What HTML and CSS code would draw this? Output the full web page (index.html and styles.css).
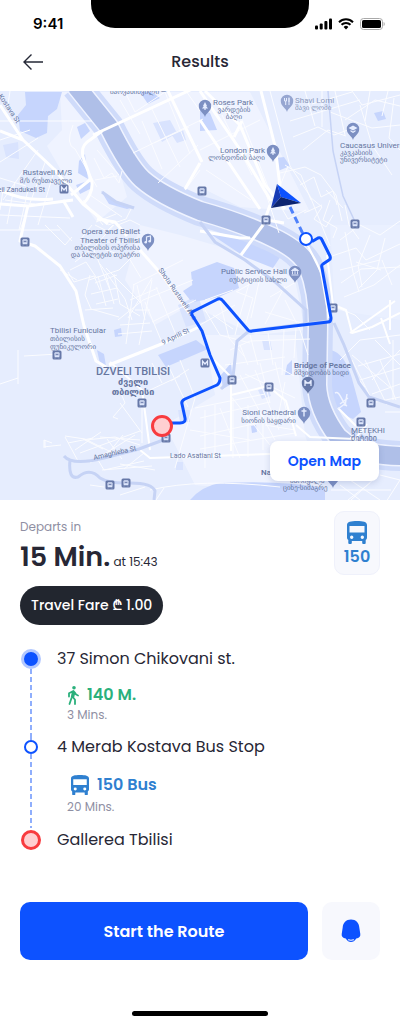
FILE: index.html
```html
<!DOCTYPE html>
<html lang="en">
<head>
  <meta charset="utf-8">
  <meta name="viewport" content="width=device-width, initial-scale=1">
  <title>Results</title>
  <link rel="stylesheet" href="styles.css">
</head>
<body>
  <div class="screen">
    <div class="status-bar">
      <span class="time">9:41</span>
      <span class="notch"></span>
      <span class="status-icons">
        <svg width="17" height="12" viewBox="0 0 17 12"><rect y="7.5" width="3" height="4" rx="1"/><rect x="4.7" y="5.5" width="3" height="6" rx="1"/><rect x="9.4" y="3" width="3" height="8.5" rx="1"/><rect x="14" y="0.5" width="3" height="11" rx="1"/></svg>
        <svg width="16" height="12" viewBox="0 0 16 12"><path d="M8 11.5 5.6 9a3.5 3.5 0 0 1 4.8 0z"/><path d="M3.5 6.8a6.4 6.4 0 0 1 9 0M1 4.2a10 10 0 0 1 14 0" fill="none" stroke="#000" stroke-width="2"/></svg>
        <svg width="25" height="12" viewBox="0 0 25 12"><rect x="0.5" y="0.5" width="22" height="11" rx="3" fill="none" stroke="#a9a9a9"/><rect x="2" y="2" width="19" height="8" rx="1.6"/><path d="M23.6 4v4c1.5-.6 1.5-3.4 0-4z" fill="#a9a9a9"/></svg>
      </span>
    </div>

    <header class="header">
      <button class="back" aria-label="Back">
        <svg width="22" height="18" viewBox="0 0 22 18"><path d="M9.5 1.5 2 9l7.5 7.5M2 9h19" fill="none" stroke="#252836" stroke-width="1.4"/></svg>
      </button>
      <h1>Results</h1>
    </header>

    <div class="map">
      <svg class="map-canvas" viewBox="0 91 400 409">
        <defs>
          <g id="stop">
            <rect x="-4.5" y="-4.5" width="9" height="9" rx="1.5" fill="#6678a8"/>
            <rect x="-2.5" y="-2.7" width="5" height="5" rx="1" fill="#dce5fb"/>
            <path d="M-1.7-1.5h3.4v1.700h-3.4zM-2 2.500v1M2 2.500v1" fill="#6678a8" stroke="#dce5fb" stroke-width=".5"/>
          </g>
          <g id="metro">
            <rect x="-4.5" y="-4.5" width="9" height="9" rx="1.5" fill="#6678a8"/>
            <path d="M-2.5 2.500v-4.500L0 1l2.500-3v4.500" fill="none" stroke="#e6edff" stroke-width="1.3"/>
          </g>
          <path id="pin" d="M0 11C-1 7-6.200 5.500-6.200 0a6.200 6.200 0 0 1 12.400 0C6.200 5.500 1 7 0 11z"/>
          <path id="tree" d="M0-4 2 0H1.200L3 2.500H.6V4H-.6V2.500H-3L-1.200 0H-2z" fill="#e6edff"/>
        </defs>

        <rect y="91" width="400" height="409" fill="#e6edfe"/>

        <!-- lighter districts -->
        <g fill="#eff3ff">
          <path d="M60 92h15l42 70 10 35-30 25-28-38-22-38 15-16zM95 92h105v110l-55-30-32-50zM190 92h60l60 120-70-5-40-20z"/>
          <path d="M140 225l40 10 85 25 30 20 10 50-50 5-65-30-35 20-30-45zM205 335l90 0 10 100 20 60-130-10-30-60 50-30z"/>
          <path d="M330 225h70v95l-65-10z" fill="#eaf0ff"/>
        </g>

        <!-- parks and large buildings -->
        <g fill="#d9e3fe">
          <path d="M153 123l17-3 7 13-15 9zM170 132l13-2 3 10-9 3zM3 145l15-3 1 17-13-2zM176 462h7v8h-7zM178 305l20-10 8 26-20 6zM262 340h8l2 10h-8zM178 410h12v12h-10zM258 390l10-3 3 9-9 3z"/>
        </g>
        <g fill="#c6d5fd">
          <path d="M25 92h37l-5 17-9 7-1 17-11 5-16-7-2-16 8-10z"/>
          <path d="M77 127l8-4 5 8-9 8zM79 161l6-7 3 25-10-6zM76 185l14-5 2 8-12 6zM101 191l14 10 20 6-8 2-18-5z"/>
          <path d="M191 272l26-10 17 6 5 20-20 9-25 5zM212 235l38 2 33 16-10 15-28-11zM183 291l17-11v18l-10 2zM158 355l38-15 12 9-42 18zM114 330l7-2 1 8-7 1z"/>
          <path d="M200 109l10 4 7 17-17 1zM276 158l8-1 6 9-12 5zM374 113l9-2 3 8-8 2zM251 426l5-1 1 7-5 1zM97 350l7 4 2 12-6-2zM221 375l10-12 2 20-10 6z"/>
          <path d="M328 350c14 0 22 18 26 36l7 26-8 7c-18-7-26-22-26-54z"/>
          <path d="M190 500q12-14 30-17 60-3 105 5v12z"/>
          <path d="M140 92h12l8 6-12 6zM287 365l5-5v15h-7z"/>
        </g>

        <!-- river banks, then the river -->
        <path class="bank" d="M76 86l33 41q20 40 33 52 18 16 58 32 40 11 72 26 28 13 36 29 10 25 10 59l-1 60q1 25 21 52l10 8q20 11 56 11"/>
        <path class="bank-line" d="M76 86l33 41q20 40 33 52 18 16 58 32 40 11 72 26 28 13 36 29 10 25 10 59l-1 60q1 25 21 52l10 8q20 11 56 11"/>
        <path class="river" d="M76 86l33 41q20 40 33 52 18 16 58 32 40 11 72 26 28 13 36 29 10 25 10 59l-1 60q1 25 21 52l10 8q20 11 56 11"/>

        <!-- side streets -->
        <g class="street">
          <path d="M0 140l30-10M0 162l38-24M10 91l-3 20M38 150l-35 50M46 160L20 230M55 168L38 225M0 215l70 3M0 230l60 0M3 190l-3 20M15 182l-8 42M28 190l-9 40M0 178l26 8M5 200l30 4M73 125q-8 20 2 24l22 38M94 158l10 20 8-5 7 10 3-12M95 180l22-4M97 150l22 25M90 195l32 22M83 200l20 25M96 222l20-8M108 225l18-6 5-10M118 225l12-5 10 5M0 121h92"/>
          <path d="M133 153l70-34M142 121l20 48M151 107l29 60M165 92l25 62M120 100l20 34M125 92l10 20 30-20M186 91l14 20M154 143l35-16M158 183l40-38M185 190l15-20"/>
          <path d="M200 150l60-30M222 115l30 60M237 107l35 90M206 170l45 30M233 160l20-10M259 173l20 60M270 91l20 75 20 30 20 50M285 165l16 10 10 25M290 121l70-21M293 137l25-10 16 8 22-8M305 91l10 35M322 91l0 36M335 91l10 44M312 104l40-12M303 150l25-20 18 6M345 120l30-20 25 6M330 112l42 16 28-3M370 91l-5 30M388 91l-6 25M360 105l12 40 20 30M352 91l10 14 38-10M394 98l-5 40 11 12"/>
          <path d="M280 173l25-6 16 8 15 20 6 26M300 185l14-8 7 20 12-6 4 14M310 197l12 10-8 12 12 8 7-12M326 190l17 18M304 213l18-8M345 205l4 20 10 14M273 193l15 26 18-9M288 166l-8 20 14 20M330 200l-7 20 14 8-4 10"/>
          <path d="M340 240l20-15 20 10 20-14M332 256l24-8 10 12 34-16M345 232l8 40 6 20M370 235l-12 30 4 22M385 238l-8 32-18 18M340 270l40-10M341 283l20-14 39-2M344 297l30-12 26-20M382 260l10 25M356 262l25 8"/>
          <path d="M70 270l16-8 10 15M75 262l20-16 34 12 12 20M68 272l6 10 20-6 6 14M90 275l-5 20 6 14 28 8M95 283l22-8M91 294l26-6M96 304l22-5M98 276l8 30M106 275l8 29M114 274l6 30 20 12M89 280l30-10 12-12M100 264l25 35 7 21M60 270l17 10M85 310l28-2M78 250l15-8 42 0M80 240l12-15M96 245l18-20M106 268l35 35M118 320l25-20 50-20M128 318l24-40M139 345l13-65M120 325l30-2M118 334l34-3M126 344l8-60M145 320l-8-35M150 310l-15 0M130 300l28-12M133 285l50-25M152 322l44-22M163 345l-18-43M176 335l-20-48M110 290l-16-40M45 225l20 20 7-8M57 225l15 16M95 225l12 6 6-6M24 356l34-2M18 350v34M18 378l-18 6"/>
          <path d="M205 310l15 25 30 8M200 325l35-20M219 298l10 40 15 18M236 292l30-17 25 20M250 280l-10 35-5 20M261 273l-10 45M270 297l26-15M265 312l40 12M285 286l-20 38M237 292l16 6-7 25M250 335l8 30M268 333l5 32M284 330l-2 45M296 328l-2 30M230 350l20-9 60-2M225 365l60-8M240 345l8 20M285 300l15 30 8 25M213 315l20 14M205 300l28-10"/>
          <path d="M180 360l15 38M195 398l-20 70M195 408l70-14M230 382l50-14 14 8M230 395l40 50M240 375l35 65M255 370l24 60M275 362l14 60M215 405l0 55M200 418l70-16M200 436l75-17M233 398v60M248 405v52M263 410v40M200 449l95-16M220 408l20 50M285 382l-8 40M245 374l50 24M265 425l30 5M205 410v58M190 430l60 10M260 363l10 40M171 381l18-12M168 365l20 42M152 363l10 20M150 390l30-14"/>
          <path d="M120 391l5 12-12 14 5 2M120 403l22 30M142 403v40M65 436l20 3 30 15M80 453l60-22M90 463l45-28M85 440l30-3 25 8M103 449l-20-10M65 437l13 24M100 437l40 3M43 447l18-2M45 440v8M52 443l-8-3 0 6M98 460l6 10 40-9M102 470l50-4M75 450l26-18M123 435l-12 15M144 453l-20 16M120 464l35 6M107 439l15 20M68 443l25-5M90 485l14 2M120 495l25-8"/>
          <path d="M352 360l20 40M365 360l22 45M380 360l16 40M358 366l42-12M360 380l40-12M372 394l28-10M376 402l24-5M340 360l20-20 40-5M370 330l-15-15-20-8M355 375l10 12M352 355l40 34M400 350l-28 30M375 340l25 25M393 340v60M400 412l-15 0M375 478l-24 22M380 475l20 5-14 22M370 483l-22 17M350 480l30 20M331 490h60M150 490q50-12 130-3M156 500l8-12M340 485l20 15"/>
        </g>

        <!-- main roads -->
        <g class="road">
          <path d="M0 105l23 35 32 30 28 34 25 20M0 131l23 9M83 204q10-10 9-22l-8-22q-5-14 6-20l12-9M91 179l-20 16M0 190q25 12 53 9M0 204l28 2 45-6"/>
          <path d="M28 205l-8 36 15 5 25 20 16 25 8 35 12 35 10 6M109 365l60-24 30-14M140 250l22 25 27 38M97 219l18 3 12 14M73 217l-10-17"/>
          <path d="M93 135l108-50M168 91l34 71M200 163l-15 26M205 91l35 34 25 60 20 24M242 121l-8 16M261 91l14 55 5 40M200 120l60 89M200 91l41 60 30 50M270 205l-7 20M263 225l-22 30M200 231l40 7 10 0M261 219l23 4"/>
        </g>
        <g class="road thin">
          <path d="M305 240l16 32 8 46M334 305l12 5 6 23 20-6 28-14M350 333l45-32M381 318l9 26M390 300v30M327 255l6 50"/>
          <path d="M231 381v70M268 386l-37 9M268 386l18 15 10 35M110 362l32 28 8 60M140 450l10 8 120-4M296 425l14 12 45 2 12-15M350 438l20 10M214 360l20 20M338 408l18 18"/>
        </g>

        <!-- highways -->
        <g class="highway">
          <path d="M200 222l15 20 30 18 30 22 31 28v12M249 331l80-10M334 323l10 22 15 38 10 14 31 10M249 331l-12 10-4 36-12 12M102 192l14 10 18 6"/>
          <path d="M64 456q8 10 40 2l35-9 27-10M70 460q-2 20 8 17 12-10 22 1 8 5 25 5 27-1 30 8l-1 9"/>
          <path d="M328 91l5 60 10 45 14 30" stroke-width="1.5"/>
        </g>
        <path d="M335 393c5-3 7 10 12 13M347 394l-2 12M340 404l8-6M338 409l8-6" fill="none" stroke="#eff3ff" stroke-width="1.5"/>

        <g class="label">
          <text class="geo" x="110" y="94">ბარვახიშვილი —</text>
          <text x="213" y="105">Roses Park</text>
          <text class="geo mid" x="234" y="112">ვარდების</text>
          <text class="geo mid" x="234" y="119">ბაღი</text>
          <g opacity=".7">
            <text x="295" y="103">Shavi Lomi</text>
            <text class="geo" x="295" y="110">შავი ლომი</text>
          </g>
          <text x="340" y="148">Caucasus University</text>
          <text class="geo" x="340" y="155">კავკასიის</text>
          <text class="geo" x="340" y="162">უნივერსიტეტი</text>
          <text class="end" x="265" y="153">London Park</text>
          <text class="geo end" x="265" y="160">ლონდონის ბაღი</text>
          <text class="end" x="72" y="175">Rustaveli M/S</text>
          <text class="geo end" x="72" y="183">მ/ს რუსთაველი</text>
          <text class="small end" x="45" y="192">cheil Zandukeli St</text>
          <text class="small" transform="translate(-2 96) rotate(56)">Kostava St</text>
          <text class="end" x="140" y="234">Opera and Ballet</text>
          <text class="end" x="140" y="243">Theater of Tbilisi</text>
          <text class="geo end" x="140" y="250">თბილისის ოპერისა</text>
          <text class="geo end" x="140" y="257">და ბალეტის თეატრი</text>
          <text class="small" transform="translate(158 270) rotate(55)">Shota Rustaveli Ave</text>
          <text class="small" transform="translate(163 345) rotate(-26)">9 Aprili St</text>
          <text x="50" y="333">Tbilisi Funicular</text>
          <text class="geo" x="50" y="341">თბილისის</text>
          <text class="geo" x="50" y="349">ფუნიკულორი</text>
          <text class="end" x="287" y="274">Public Service Hall</text>
          <text class="geo end" x="287" y="282">იუსტიციის სახლი</text>
          <text class="district mid" x="133" y="375">DZVELI TBILISI</text>
          <text class="district-geo mid" x="133" y="385">ძველი</text>
          <text class="district-geo mid" x="133" y="395">თბილისი</text>
          <text class="small" transform="translate(94 460) rotate(-13)">Amaghleba St</text>
          <text class="small" x="170" y="458">Lado Asatiani St</text>
          <text class="end" x="296" y="415">Sioni Cathedral</text>
          <text class="geo end" x="296" y="423">სიონის საყდარი</text>
          <text class="strong" x="294" y="368">Bridge of Peace</text>
          <text class="geo" x="294" y="375">მშვიდობის ხიდი</text>
          <text x="351" y="433">METEKHI</text>
          <text x="351" y="441">მეტეხი</text>
          <text class="strong" x="261" y="475">Narikala</text>
          <text class="geo" x="290" y="483">ნარიყალა</text>
          <text class="geo" x="283" y="490">ციხე-სიმაგრე</text>
        </g>

        <use href="#stop" x="25" y="242"/>
        <use href="#stop" x="202" y="191"/>
        <use href="#stop" x="266" y="220"/>
        <use href="#stop" x="355" y="224"/>
        <use href="#stop" x="333" y="308"/>
        <use href="#stop" x="57" y="355"/>
        <use href="#stop" x="142" y="403"/>
        <use href="#stop" x="166" y="438"/>
        <use href="#stop" x="110" y="485"/>
        <use href="#stop" x="126" y="483"/>
        <use href="#stop" x="232" y="380"/>
        <use href="#stop" x="269" y="387"/>
        <use href="#stop" x="371" y="403"/>
        <use href="#stop" x="361" y="422"/>
        <use href="#metro" x="64" y="189"/>
        <use href="#metro" x="205" y="363"/>

        <g fill="#7c8fc2">
          <g transform="translate(205 106)"><use href="#pin"/><use href="#tree"/></g>
          <g transform="translate(287 101)" opacity=".75"><use href="#pin"/><path d="M-2.5-3v3h1.200v4M-.5-3v3h-1M2-3.500v7.500M2-3v4" fill="none" stroke="#e6edff"/></g>
          <g transform="translate(353 129)"><use href="#pin"/><path d="M0-3.500 4.500-1 0 1.500-4.500-1zM-2.500 1 0 2.500 2.500 1v1.500L0 4l-2.500-1.500z" fill="#e6edff"/></g>
          <g transform="translate(273 151)"><use href="#pin"/><use href="#tree"/></g>
          <g transform="translate(148 240)"><use href="#pin"/><path d="M-1.500 2v-5L2.500-4v5" fill="none" stroke="#e6edff" stroke-width="1.2"/><circle cx="-2.3" cy="2.2" r="1.3" fill="#e6edff"/><circle cx="1.7" cy="1.2" r="1.3" fill="#e6edff"/></g>
          <g transform="translate(295 272)"><use href="#pin"/><path d="M0-4 3.500-1.500h-7zM-2.500-.8v3M0-.8v3M2.500-.8v3M-3.500 3h7" fill="#e6edff" stroke="#e6edff" stroke-width=".9"/></g>
          <g transform="translate(308 383)" fill="#6678a8"><use href="#pin"/><path d="M-3 3v-6M3 3v-6M-3 0h6M-3-2Q0 2 3-2" fill="none" stroke="#e6edff" stroke-width="1.3"/></g>
          <g transform="translate(304 413)"><use href="#pin"/><path d="M0-4.500v8M-2.500-2h5" stroke="#e6edff" stroke-width="1.4"/></g>
          <g transform="translate(333 477)"><use href="#pin"/></g>
        </g>

        <!-- route -->
        <path d="M290 207l14 29" fill="none" stroke="#4f82fb" stroke-width="3" stroke-dasharray="7 4"/>
        <path d="M306 240l7 1 5-3q3-1 4 2l8 16q1 3-1 4l-6 4q-2 1-1 4l9 50q0 4-3 4l-76 9q-2 1-4-1l-25-29q-2-3-5-2l-24 12q-3 1-2 4l10 16 8 24 10 23q0 5-3 7l-32 14q-4 2-3 5l3 14q1 5-5 5h-17" fill="none" stroke="#0d52ff" stroke-width="3" stroke-linejoin="round"/>
        <circle cx="306" cy="239" r="6" fill="#fff" stroke="#0d52ff" stroke-width="2"/>
        <circle cx="162" cy="426" r="9.5" fill="#ffcfd1" stroke="#f83b3f" stroke-width="3"/>
        <path d="M277 184l24 19-20-6z" fill="#0d52ff"/>
        <path d="M277 184l4 13-10 11z" fill="#173bb5"/>
        <path d="M271 208l10-11 20 6z" fill="#0d2470"/>
      </svg>
      <button class="open-map">Open Map</button>
    </div>

    <main class="details">
      <div class="summary">
        <div>
          <p class="caption">Departs in</p>
          <p class="departure"><strong>15 Min.</strong> <span>at 15:43</span></p>
          <p class="fare">Travel Fare ₾ 1.00</p>
        </div>
        <div class="line-badge">
          <svg width="20" height="23" viewBox="0 0 20 23"><path fill="#2f80d0" fill-rule="evenodd" d="M0 4C0 .8 4 0 10 0s10 .8 10 4v12.500c0 1-.5 2-1.300 2.600V22a1 1 0 0 1-1 1h-1.500a1 1 0 0 1-1-1v-2H4.800v2a1 1 0 0 1-1 1H2.300a1 1 0 0 1-1-1v-2.900C.5 18.500 0 17.500 0 16.500zM2.500 5v6.500h15V5zM4.700 14.500a1.700 1.700 0 1 0 0 3.400 1.700 1.700 0 0 0 0-3.400zm10.600 0a1.700 1.700 0 1 0 0 3.400 1.700 1.700 0 0 0 0-3.400z"/></svg>
          <span>150</span>
        </div>
      </div>

      <ol class="route">
        <li>
          <div class="marker">
            <span class="dot dot-start"></span>
            <span class="track"></span>
          </div>
          <div>
            <p class="place">37 Simon Chikovani st.</p>
            <div class="leg leg-walk">
              <p class="leg-title">
                <svg width="12" height="19" viewBox="0 0 12 19"><circle cx="7" cy="1.8" r="1.8" fill="#2bb07c"/><path d="M11 9.500C9.300 9 8.500 8.300 7.700 6.300L6.300 5 2 7.200V10.500M5.800 5.500 4.700 11.500 2.500 18M7.500 6.500 6.200 11.500 8 13.800V18" fill="none" stroke="#2bb07c" stroke-width="1.8" stroke-linecap="round" stroke-linejoin="round"/></svg>
                140 M.
              </p>
              <p class="leg-time">3 Mins.</p>
            </div>
          </div>
        </li>
        <li>
          <div class="marker">
            <span class="track track-lead"></span>
            <span class="dot dot-stop"></span>
            <span class="track"></span>
          </div>
          <div>
            <p class="place">4 Merab Kostava Bus Stop</p>
            <div class="leg leg-bus">
              <p class="leg-title">
                <svg width="18" height="20" viewBox="0 0 20 23" preserveAspectRatio="none"><path fill="#2f80d0" fill-rule="evenodd" d="M0 4C0 .8 4 0 10 0s10 .8 10 4v12.500c0 1-.5 2-1.300 2.600V22a1 1 0 0 1-1 1h-1.500a1 1 0 0 1-1-1v-2H4.800v2a1 1 0 0 1-1 1H2.300a1 1 0 0 1-1-1v-2.900C.5 18.500 0 17.500 0 16.500zM2.500 5v6.500h15V5zM4.700 14.500a1.700 1.700 0 1 0 0 3.400 1.700 1.700 0 0 0 0-3.400zm10.600 0a1.700 1.700 0 1 0 0 3.400 1.700 1.700 0 0 0 0-3.400z"/></svg>
                150 Bus
              </p>
              <p class="leg-time">20 Mins.</p>
            </div>
          </div>
        </li>
        <li>
          <div class="marker">
            <span class="dot dot-end"></span>
          </div>
          <p class="place">Gallerea Tbilisi</p>
        </li>
      </ol>

      <div class="actions">
        <button class="start">Start the Route</button>
        <button class="notify" aria-label="Notify me">
          <svg width="20" height="24" viewBox="0 0 20 24"><path fill="#0d52ff" d="M10 .5C5 .5 2 4 1.700 8.500L.7 15c-.4 2.800 1.300 4 4 4.500 1.500 2.500 3.300 3.500 5.300 3.500s3.800-1 5.300-3.500c2.700-.5 4.400-1.700 4-4.500l-1-6.500C18 4 15 .5 10 .5z"/><path d="M7.500 20.800Q10 21.600 12.500 20.800" fill="none" stroke="#fff" stroke-width="1.1" stroke-linecap="round"/></svg>
        </button>
      </div>
    </main>

    <div class="home-indicator"></div>
  </div>
</body>
</html>
```
FILE: styles.css
```css
* {
  box-sizing: border-box;
}

body {
  margin: 0;
  font-family: Poppins, Inter, "DejaVu Sans", sans-serif;
  background: #fff;
  color: #272735;
}

h1, p, ol {
  margin: 0;
  padding: 0;
}

button {
  border: none;
  padding: 0;
  font-family: inherit;
  cursor: pointer;
}

svg {
  display: block;
}

.screen {
  display: flex;
  flex-direction: column;
  min-height: 100vh;
}

/* Status bar */
.status-bar {
  display: grid;
  grid-template-columns: 1fr 218px 1fr;
  height: 36px;
}

.time {
  padding: 14px 0 0 33px;
  font-family: Inter, sans-serif;
  font-size: 15px;
  line-height: 20px;
  font-weight: 600;
  color: #000;
}

.notch {
  height: 28px;
  background: #000;
  border-radius: 0 0 24px 24px;
}

.status-icons {
  display: flex;
  justify-content: flex-end;
  gap: 6px;
  padding: 18px 15px 0 0;
}

.header {
  display: grid;
  grid-template-columns: 24px 1fr 24px;
  align-items: center;
  height: 55px;
  padding: 0 20px 4px;
}

.back {
  padding-left: 2px;
  background: none;
}

.header h1 {
  font-size: 16px;
  font-weight: 500;
  text-align: center;
}

/* Map */
.map {
  position: relative;
}

.map-canvas {
  width: 100%;
  height: auto;
}

.bank,
.bank-line,
.river,
.street,
.road,
.highway {
  fill: none;
}

.bank {
  stroke: #cfdbfa;
  stroke-width: 30;
}

.bank-line {
  stroke: #eff3ff;
  stroke-width: 21;
}

.river {
  stroke: #afbfe8;
  stroke-width: 18;
}

.street {
  stroke: #fbfcff;
  stroke-width: 1;
}

.road {
  stroke: #fff;
  stroke-width: 3;
  stroke-linejoin: round;
}

.thin {
  stroke-width: 2;
}

.highway {
  stroke: #c6d3f5;
  stroke-width: 3;
}

.label {
  fill: #65759f;
  font-family: Roboto, "DejaVu Sans", sans-serif;
  font-size: 8px;
}

.geo {
  font-size: 7px;
}

.small {
  font-size: 7px;
}

.strong {
  font-weight: 600;
}

.district {
  font-size: 11px;
  font-weight: 500;
}

.district-geo {
  font-size: 9px;
  font-weight: 600;
}

.mid {
  text-anchor: middle;
}

.end {
  text-anchor: end;
}

.open-map {
  position: absolute;
  right: 21px;
  bottom: 19px;
  height: 40px;
  padding: 0 18px;
  border-radius: 8px;
  background: #fff;
  box-shadow: 0 2px 6px rgba(60, 80, 140, 0.2);
  color: #0d52ff;
  font-size: 14px;
  font-weight: 600;
}

/* Trip details */
.details {
  padding: 11px 20px 0;
}

.summary {
  display: flex;
  justify-content: space-between;
  align-items: flex-start;
}

.caption {
  margin-top: 8px;
  color: #8f8fa3;
  font-size: 12px;
  line-height: 16px;
}

.departure {
  margin-top: 4px;
  font-size: 12px;
  line-height: 36px;
}

.departure strong {
  font-size: 27px;
  font-weight: 600;
}

.fare {
  display: inline-block;
  margin-top: 6px;
  padding: 0 11px;
  border-radius: 20px;
  background: #22262f;
  color: #fff;
  font-size: 14px;
  font-weight: 500;
  line-height: 39px;
}

.line-badge {
  display: flex;
  flex-direction: column;
  align-items: center;
  gap: 3px;
  width: 46px;
  padding: 9px 0 7px;
  border: 1px solid #eff1fb;
  border-radius: 10px;
  background: #f7f8fd;
  color: #2f80d0;
  font-size: 16px;
  font-weight: 600;
  line-height: 20px;
}

/* Route steps */
.route {
  margin-top: 22px;
  list-style: none;
}

.route li {
  display: grid;
  grid-template-columns: 22px 1fr;
  column-gap: 15px;
}

.marker {
  display: flex;
  flex-direction: column;
  align-items: center;
}

.dot {
  flex: none;
  border-radius: 50%;
}

.dot-start {
  width: 20px;
  height: 20px;
  margin-top: 2px;
  border: 3px solid #b3c8ff;
  background: #0d52ff;
}

.dot-stop {
  width: 14px;
  height: 14px;
  border: 2px solid #0d52ff;
  background: #fff;
}

.dot-end {
  width: 20px;
  height: 20px;
  margin-top: 2px;
  border: 3px solid #f83b3f;
  background: #ffcfd1;
}

.track {
  flex: 1;
  width: 2px;
  background: repeating-linear-gradient(#8faefc 0 5px, transparent 5px 8px);
}

.track-lead {
  flex: none;
  height: 5px;
}

.place {
  font-size: 16px;
  line-height: 24px;
}

.leg {
  margin: 12px 0;
  padding-left: 10px;
}

.leg-bus {
  margin: 12px 0 13px;
}

.leg-title {
  display: flex;
  align-items: center;
  gap: 8px;
  font-size: 16px;
  font-weight: 600;
  line-height: 24px;
}

.leg-walk .leg-title {
  color: #2bb07c;
}

.leg-bus .leg-title {
  padding-left: 4px;
  color: #2f80d0;
  line-height: 28px;
}

.leg-time {
  color: #8f8fa3;
  font-size: 12px;
  line-height: 16px;
}

.actions {
  display: grid;
  grid-template-columns: 1fr 58px;
  gap: 14px;
  margin-top: 50px;
}

.actions button {
  display: flex;
  align-items: center;
  justify-content: center;
  height: 58px;
  border-radius: 10px;
}

.actions .start {
  background: #0d52ff;
  color: #fff;
  font-size: 16px;
  font-weight: 600;
}

.actions .notify {
  background: #f7f8fd;
}

.home-indicator {
  width: 136px;
  height: 5px;
  margin: auto auto 8px;
  border-radius: 3px;
  background: #000;
}
```
